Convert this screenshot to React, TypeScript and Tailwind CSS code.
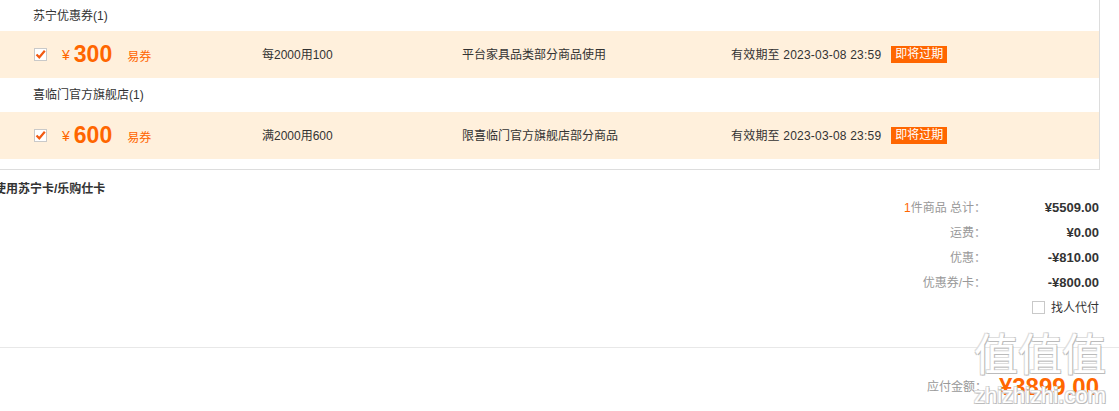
import React from 'react';

const coupons = [
  {
    store: '苏宁优惠券(1)',
    amount: '300',
    rule: '每2000用100',
    scope: '平台家具品类部分商品使用',
    expire: '有效期至 2023-03-08 23:59',
  },
  {
    store: '喜临门官方旗舰店(1)',
    amount: '600',
    rule: '满2000用600',
    scope: '限喜临门官方旗舰店部分商品',
    expire: '有效期至 2023-03-08 23:59',
  },
];

const summary = [
  { label: '件商品 总计：', count: '1', value: '¥5509.00' },
  { label: '运费：', value: '¥0.00' },
  { label: '优惠：', value: '-¥810.00' },
  { label: '优惠券/卡：', value: '-¥800.00' },
];

const CheckedBox = () => (
  <span className="w-[13px] h-[13px] border border-[#c9c9c9] bg-white flex items-center justify-center">
    <svg width="11" height="11" viewBox="0 0 11 11">
      <path d="M1.5 5.5 L4.3 8.3 L9.8 1.8" fill="none" stroke="#f25a12" strokeWidth="2.2" />
    </svg>
  </span>
);

export default function App() {
  return (
    <div className="relative w-[1119px] h-[411px] overflow-hidden bg-white text-[12px] text-[#333] font-['Liberation_Sans','Noto_Sans_CJK_SC',sans-serif]">
      <div className="w-[1100px] border-r border-b border-[#dddddd] pb-[10px]">
        {coupons.map((c, i) => (
          <div key={i}>
            <div className={`${i === 0 ? 'h-[31px]' : 'h-[34px]'} flex items-center pl-[33px] text-[#333]`}>
              {c.store}
            </div>
            <div className="h-[47px] bg-[#fff0dc] flex items-center">
              <div className="w-[262px] flex items-center pl-[34px]">
                <CheckedBox />
                <span className="ml-[15px] text-[#ff6600] text-[14px] mt-[2px]">¥</span>
                <span className="ml-[4px] text-[#ff6600] text-[23px] font-bold leading-none">{c.amount}</span>
                <span className="ml-[15px] text-[#ff6600] text-[12px] mt-[5px]">易券</span>
              </div>
              <div className="w-[200px]">{c.rule}</div>
              <div className="w-[269px]">{c.scope}</div>
              <div className="flex items-center">
                <span className="tracking-[0.2px]">{c.expire}</span>
                <span className="ml-[10px] bg-[#ff6600] text-white px-[4px] h-[17px] leading-[17px]">即将过期</span>
              </div>
            </div>
          </div>
        ))}
      </div>

      <div className="ml-[-6px] mt-[11px] h-[16px] leading-[16px] font-bold text-[#333]">使用苏宁卡/乐购仕卡</div>

      <div className="mt-[-2px] w-[1099px] flex flex-col items-end">
        {summary.map((s, i) => (
          <div key={i} className="h-[25px] flex items-center">
            <span className="text-[#999] text-right">
              {s.count && <span className="text-[#ff6600]">{s.count}</span>}
              {s.label}
            </span>
            <span className="w-[113px] text-right font-bold text-[13px] text-[#333]">{s.value}</span>
          </div>
        ))}
        <div className="h-[25px] flex items-center">
          <span className="w-[13px] h-[13px] border border-[#c9c9c9] bg-white" />
          <span className="ml-[6px] text-[#333]">找人代付</span>
        </div>
      </div>

      <div className="mt-[27px] border-t border-[#e8e8e8]" />

      <div className="mt-[27px] w-[1099px] flex items-center justify-end">
        <span className="text-[#999]">应付金额：</span>
        <span className="ml-[12px] text-[#ff6600] text-[24px] font-bold leading-none">¥3899.00</span>
      </div>

      <div className="absolute left-[970px] top-[330px] w-[140px] flex flex-col items-center pointer-events-none">
        <span className="text-[44px] leading-[52px] text-white [text-shadow:1px_1px_0_#bbb,-1px_-1px_0_#ddd,1px_-1px_0_#ccc,-1px_1px_0_#ccc]">值值值</span>
        <span className="text-[22px] leading-[28px] text-white [text-shadow:1px_1px_0_#bbb,-1px_-1px_0_#ddd,1px_-1px_0_#ccc,-1px_1px_0_#ccc]">zhizhizhi.com</span>
      </div>
    </div>
  );
}
